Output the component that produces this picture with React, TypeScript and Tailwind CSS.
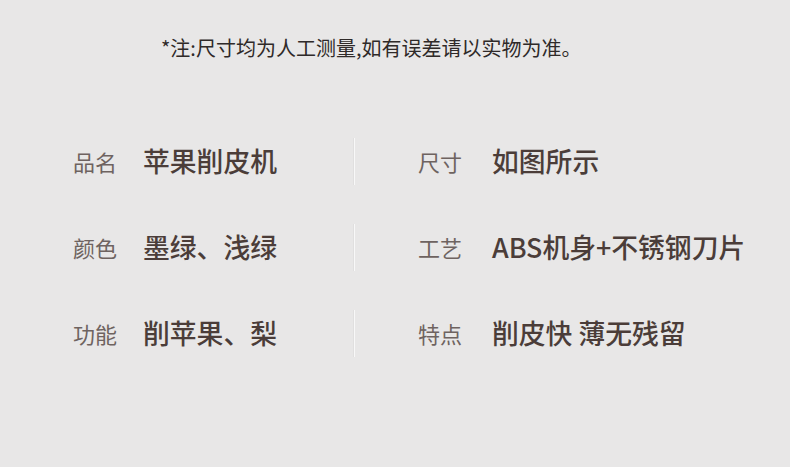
const rows = [
  [
    { label: '品名', value: '苹果削皮机' },
    { label: '尺寸', value: '如图所示' },
  ],
  [
    { label: '颜色', value: '墨绿、浅绿' },
    { label: '工艺', value: 'ABS机身+不锈钢刀片' },
  ],
  [
    { label: '功能', value: '削苹果、梨' },
    { label: '特点', value: '削皮快 薄无残留' },
  ],
]

const font = "font-['Noto_Sans_CJK_SC','Noto_Sans',sans-serif]"

function Item({ label, value, right }: { label: string; value: string; right?: boolean }) {
  return (
    <div className="flex items-center">
      <span className={`${right ? 'w-[74px]' : 'w-[70px]'} text-[22px] text-[#6e6360] leading-none`}>{label}</span>
      <span className="text-[26.8px] font-medium text-[#4b3d39] leading-none whitespace-nowrap">{value}</span>
    </div>
  )
}

export default function App() {
  return (
    <div className={`h-[467px] w-[790px] bg-[#e8e7e7] ${font}`}>
      <p className="pl-[161px] pt-[34px] text-[20px] leading-[28px] text-[#2f2a29]">
        *注:尺寸均为人工测量,如有误差请以实物为准。
      </p>
      <div className="mt-[76px] flex flex-col gap-[39px]">
        {rows.map((row, i) => (
          <div key={i} className="flex h-[47px] items-center">
            <div className="w-[281px] pl-[73px] box-content">
              <Item {...row[0]} />
            </div>
            <div className="h-[47px] w-px bg-[#f8f8f8] shadow-[-1px_0_0_#e0dfdf]" />
            <div className="pl-[63px]">
              <Item {...row[1]} right />
            </div>
          </div>
        ))}
      </div>
    </div>
  )
}
